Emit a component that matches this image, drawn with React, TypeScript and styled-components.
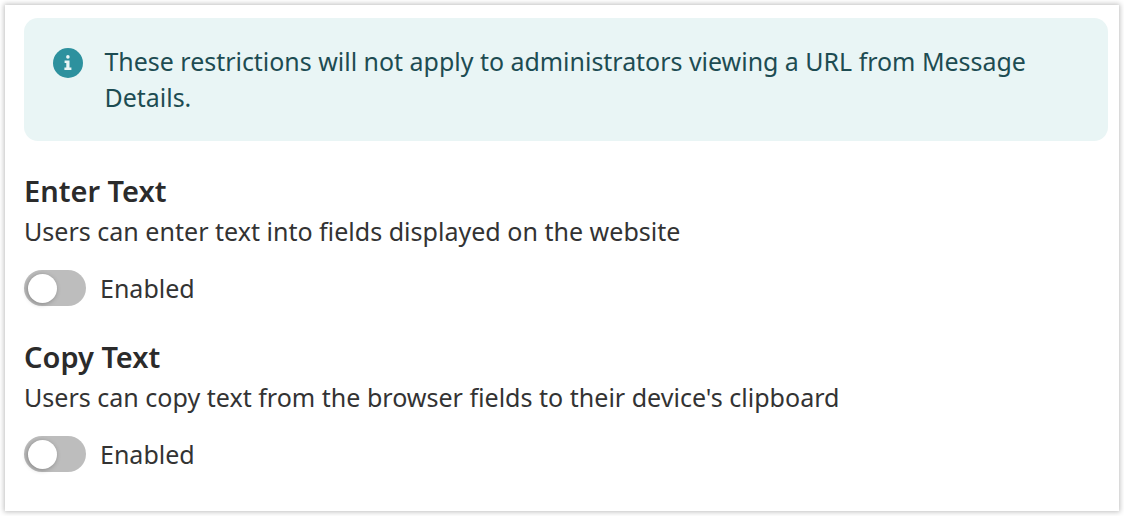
import React from "react";
import styled, { createGlobalStyle } from "styled-components";

const GlobalStyle = createGlobalStyle`
	html, body {
		margin: 0;
		padding: 0;
		background: #fff;
		font-family: "Noto Sans", "Open Sans", sans-serif;
	}
`;

const Page = styled.div`
	width: 1124px;
	height: 516px;
	padding: 5px;
	box-sizing: border-box;
	overflow: hidden;
`;

const Card = styled.div`
	width: 1114px;
	height: 506px;
	box-sizing: border-box;
	padding: 13px 11px 0 19px;
	background: #fff;
	box-shadow: 0 0 5px 1px rgba(0, 0, 0, 0.25);
`;

const Callout = styled.div`
	display: flex;
	align-items: flex-start;
	gap: 21.5px;
	height: 123px;
	box-sizing: border-box;
	padding: 25px 60px 0 29px;
	background: #e9f5f5;
	border-radius: 14px;
	color: #1d4c52;
	font-size: 24.95px;
	line-height: 36px;
`;

const InfoIcon = styled.svg`
	flex: none;
	width: 30px;
	height: 30px;
	margin-top: 4.5px;
`;

const Setting = styled.section`
	margin-top: 30px;
	& + & {
		margin-top: 31px;
	}
`;

const Title = styled.h3`
	margin: 0;
	font-size: 29px;
	line-height: 40px;
	font-weight: 600;
	color: #2b2b2b;
`;

const Description = styled.p`
	margin: 0;
	font-size: 25.05px;
	line-height: 40px;
	color: #333;
`;

const ToggleRow = styled.div`
	display: flex;
	align-items: center;
	gap: 14px;
	margin-top: 19px;
	height: 36px;
	font-size: 25px;
	color: #333;
`;

const Track = styled.span`
	position: relative;
	display: block;
	width: 62px;
	height: 36px;
	border-radius: 18px;
	background: #bdbdbd;
`;

const Knob = styled.span`
	position: absolute;
	left: 4px;
	top: 3.5px;
	width: 29px;
	height: 29px;
	border-radius: 50%;
	background: #fff;
	box-shadow: -1px 1px 5px rgba(0, 0, 0, 0.3);
`;

const settings = [
	{
		title: "Enter Text",
		description: "Users can enter text into fields displayed on the website",
	},
	{
		title: "Copy Text",
		description:
			"Users can copy text from the browser fields to their device's clipboard",
	},
];

const App: React.FC = () => {
	return (
		<Page>
			<GlobalStyle />
			<Card>
				<Callout>
					<InfoIcon viewBox="0 0 30 30">
						<circle cx="15" cy="15" r="15" fill="#2d919e" />
						<circle cx="14.9" cy="8.9" r="1.8" fill="#e9f5f5" />
						<path
							d="M11.6 12.6h4.9v7h1.9v2.4h-7v-2.4h1.9v-4.6h-1.7z"
							fill="#e9f5f5"
						/>
					</InfoIcon>
					<span>
						These restrictions will not apply to administrators viewing a URL
						from Message Details.
					</span>
				</Callout>
				{settings.map((s) => (
					<Setting key={s.title}>
						<Title>{s.title}</Title>
						<Description>{s.description}</Description>
						<ToggleRow>
							<Track>
								<Knob />
							</Track>
							Enabled
						</ToggleRow>
					</Setting>
				))}
			</Card>
		</Page>
	);
};

export default App;
